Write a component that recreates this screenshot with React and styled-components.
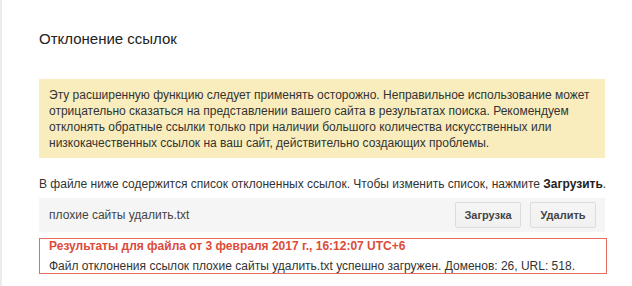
import React from "react";
import styled, { createGlobalStyle } from "styled-components";

const Global = createGlobalStyle`
  html, body { margin: 0; padding: 0; background: #fff; }
  body { font-family: "Liberation Sans", Arial, sans-serif; color: #333; }
`;

const Page = styled.div`
  min-height: 286px;
  box-sizing: border-box;
  border-left: 2px solid #ececec;
  padding: 29px 0 0 37px;
`;

const Title = styled.h1`
  margin: 0;
  font-size: 15px;
  font-weight: normal;
  line-height: 20px;
  color: #222;
`;

const Warning = styled.div`
  margin-top: 30px;
  width: 566px;
  box-sizing: border-box;
  background: #f9edbe;
  padding: 8px 10px 7px 10px;
  font-size: 12px;
  line-height: 16px;
  color: #333;
`;

const Intro = styled.p`
  margin: 18px 0 0;
  font-size: 12px;
  line-height: 16px;
  color: #333;
  white-space: nowrap;
  b { color: #222; }
`;

const FileBar = styled.div`
  margin-top: 6px;
  width: 566px;
  height: 34px;
  box-sizing: border-box;
  background: #f5f5f5;
  display: flex;
  align-items: center;
  gap: 9px;
  padding: 0 9px 0 10px;
`;

const FileName = styled.span`
  flex: 1;
  font-size: 12px;
  color: #444;
`;

const Button = styled.button`
  height: 26px;
  min-width: 66px;
  box-sizing: border-box;
  padding: 0 8px;
  border: 1px solid #dcdcdc;
  border-radius: 2px;
  background: linear-gradient(#f5f5f5, #f1f1f1);
  font-family: "Liberation Sans", Arial, sans-serif;
  font-size: 11px;
  font-weight: bold;
  color: #444;
  cursor: pointer;
`;

const Result = styled.div`
  margin-top: 6px;
  width: 568px;
  box-sizing: border-box;
  border: 1px solid #e36c5f;
  padding: 0 9px;
`;

const ResultHead = styled.div`
  font-size: 12px;
  font-weight: bold;
  line-height: 14px;
  color: #dd4b39;
`;

const ResultText = styled.div`
  margin-top: 6px;
  font-size: 12px;
  line-height: 14px;
  color: #333;
`;

export default function App() {
  return (
    <>
      <Global />
      <Page>
        <Title>Отклонение ссылок</Title>
        <Warning>
          Эту расширенную функцию следует применять осторожно. Неправильное использование может
          отрицательно сказаться на представлении вашего сайта в результатах поиска. Рекомендуем
          отклонять обратные ссылки только при наличии большого количества искусственных или
          низкокачественных ссылок на ваш сайт, действительно создающих проблемы.
        </Warning>
        <Intro>
          В файле ниже содержится список отклоненных ссылок. Чтобы изменить список, нажмите <b>Загрузить</b>.
        </Intro>
        <FileBar>
          <FileName>плохие сайты удалить.txt</FileName>
          <Button>Загрузка</Button>
          <Button>Удалить</Button>
        </FileBar>
        <Result>
          <ResultHead>Результаты для файла от 3 февраля 2017 г., 16:12:07 UTC+6</ResultHead>
          <ResultText>
            Файл отклонения ссылок плохие сайты удалить.txt успешно загружен. Доменов: 26, URL: 518.
          </ResultText>
        </Result>
      </Page>
    </>
  );
}
